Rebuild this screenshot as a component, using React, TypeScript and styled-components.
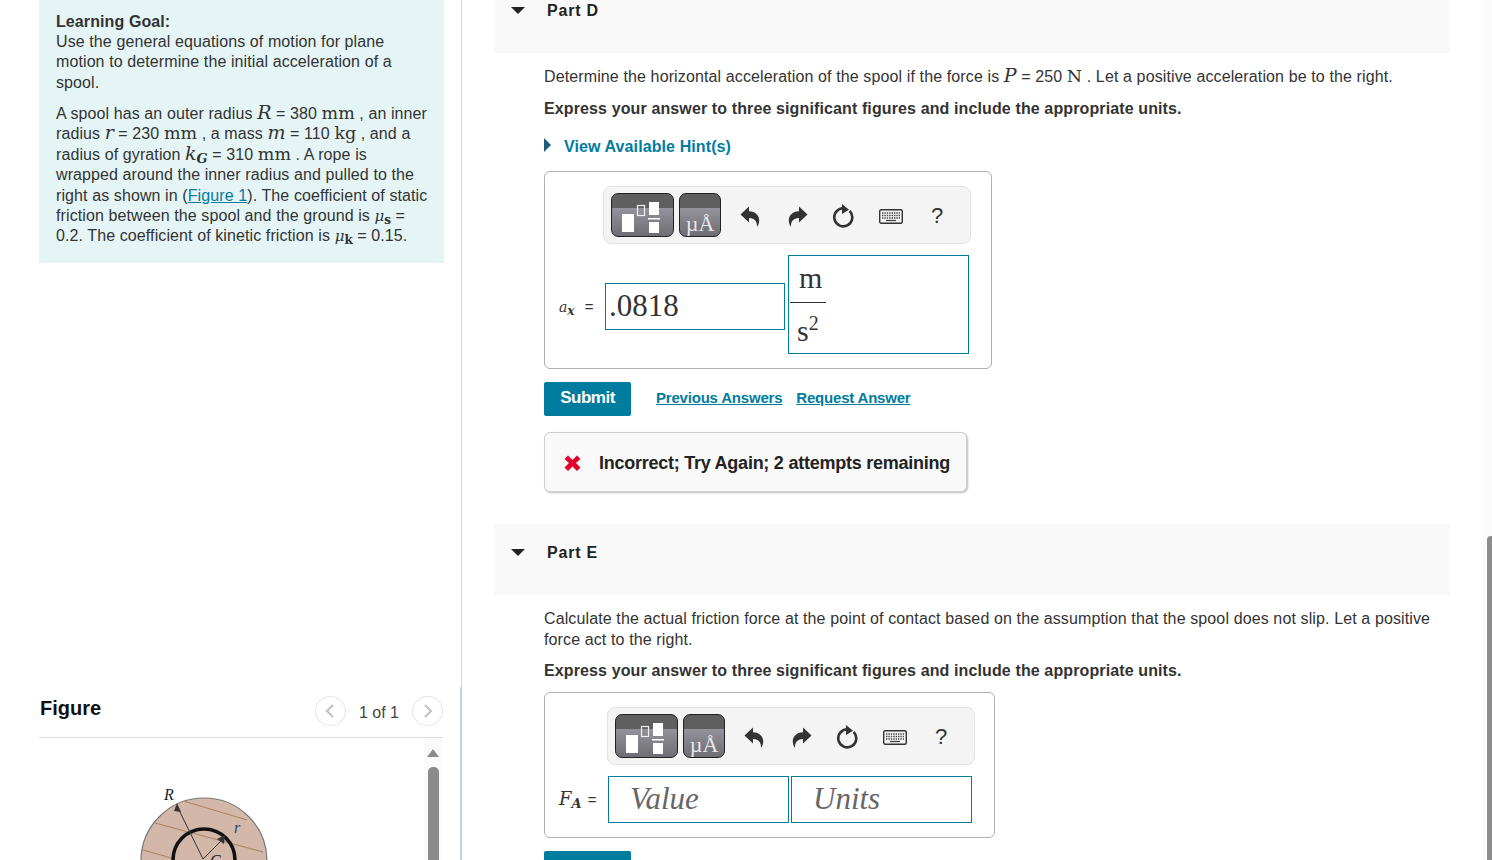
import React from 'react'
import styled, { createGlobalStyle } from 'styled-components'

const GlobalStyle = createGlobalStyle`
  html, body {
    margin: 0;
    height: 100%;
    overflow: hidden;
    background: #fff;
  }
  body {
    font-family: "Liberation Sans", Arial, sans-serif;
    font-size: 16px;
    color: #333;
  }
`

const serif = `"Liberation Serif", "Times New Roman", serif`
const mathFont = `"DejaVu Serif", "Liberation Serif", serif`
const teal = '#007c9f'

const Page = styled.div`
  display: flex;
  width: 1492px;
  height: 860px;
  overflow: hidden;
`
const LeftPane = styled.aside`
  flex: 0 0 462px;
  box-sizing: border-box;
  height: 860px;
  padding: 0 18px 0 39px;
  background:
    linear-gradient(#d3d3d3, #d3d3d3) right top / 1px 687px no-repeat,
    linear-gradient(#bcd2e8, #bcd2e8) right bottom / 2px 173px no-repeat;
  display: flex;
  flex-direction: column;
  overflow: hidden;
`
const GoalBox = styled.div`
  flex: none;
  box-sizing: border-box;
  height: 263px;
  padding: 11.6px 13px 0 17px;
  background: #e5f5f6;
  line-height: 20.4px;
  letter-spacing: 0.1px;
  p { margin: 0 0 10.8px; }
  strong { font-weight: 700; }
  a { color: ${teal}; text-decoration: underline; }
`
const V = styled.span<{ $size?: number }>`
  font-family: ${mathFont};
  font-style: italic;
  font-size: ${p => p.$size ?? 19}px;
  line-height: 0;
  letter-spacing: 0;
`
const U = styled.span<{ $size?: number }>`
  font-family: ${mathFont};
  font-size: ${p => p.$size ?? 17.5}px;
  line-height: 0;
  letter-spacing: 0;
`
const Sub = styled.sub<{ $italic?: boolean; $size?: number }>`
  font-family: ${mathFont};
  font-size: ${p => p.$size ?? 12}px;
  font-style: ${p => (p.$italic ? 'italic' : 'normal')};
  font-weight: 700;
  line-height: 0;
  letter-spacing: 0;
  vertical-align: -3px;
`
const FigureHead = styled.div`
  flex: none;
  margin-top: 432px;
  margin-right: 1px;
  height: 42px;
  border-bottom: 1px solid #dcdcdc;
  display: flex;
  align-items: flex-start;
`
const FigureTitle = styled.div`
  font-size: 20px;
  font-weight: 700;
  color: #111;
  line-height: 26px;
  flex: 1;
  padding-left: 1px;
`
const Pager = styled.div`
  display: flex;
  align-items: center;
  gap: 13px;
  margin-top: 1px;
  font-size: 16px;
  color: #444;
`
const PagerCount = styled.span`
  padding-top: 4px;
`
const RoundBtn = styled.div`
  box-sizing: border-box;
  width: 31px;
  height: 30px;
  border: 1px solid #e4e4e4;
  border-radius: 50%;
  display: flex;
  align-items: center;
  justify-content: center;
`
const FigureBody = styled.div`
  flex: 1;
  min-height: 0;
  display: flex;
  justify-content: space-between;
  overflow: hidden;
`
const SpoolArt = styled.svg`
  display: block;
  margin: 35px 0 0 87px;
  flex: none;
`
const MiniRail = styled.div`
  width: 18px;
  margin-right: 2px;
  background: #fafafa;
  display: flex;
  flex-direction: column;
  align-items: center;
  padding-top: 11px;
  gap: 10px;
`
const MiniUp = styled.div`
  width: 0;
  height: 0;
  border-left: 6px solid transparent;
  border-right: 6px solid transparent;
  border-bottom: 8px solid #8a8a8a;
`
const MiniThumb = styled.div`
  width: 11px;
  flex: 1;
  border-radius: 5px 5px 0 0;
  background: #8a8a8a;
`
const RightPane = styled.main`
  flex: 0 0 989px;
  box-sizing: border-box;
  padding-left: 32px;
  padding-right: 1px;
  overflow: hidden;
`
const PartHead = styled.div<{ $cut?: boolean }>`
  box-sizing: border-box;
  height: ${p => (p.$cut ? 53 : 71)}px;
  padding-top: ${p => (p.$cut ? 0 : 18)}px;
  background: #f9f9f9;
  display: flex;
  align-items: flex-start;
  font-weight: 700;
  line-height: 21px;
  letter-spacing: 0.8px;
  color: #222;
`
const Caret = styled.span`
  width: 0;
  height: 0;
  margin: 7px 22px 0 17px;
  border-left: 7px solid transparent;
  border-right: 7px solid transparent;
  border-top: 7px solid #222;
`
const PartBody = styled.section`
  padding-left: 50px;
  height: 471px;
  overflow: hidden;
`
const Para = styled.p<{ $top: number }>`
  margin: ${p => p.$top}px 0 0;
  line-height: 21px;
  letter-spacing: 0.12px;
`
const Instruction = styled(Para)`
  font-weight: 700;
  letter-spacing: 0.12px;
  color: #333;
`
const HintRow = styled.div`
  margin-top: 17px;
  display: flex;
  align-items: center;
  font-weight: 700;
  color: ${teal};
  line-height: 21px;
  letter-spacing: 0.1px;
`
const HintCaret = styled.span`
  width: 0;
  height: 0;
  margin-right: 13px;
  margin-bottom: 4px;
  border-top: 7px solid transparent;
  border-bottom: 7px solid transparent;
  border-left: 7px solid #1d5c7a;
`
const AnswerBox = styled.div<{ $width: number; $height: number; $top: number }>`
  box-sizing: border-box;
  width: ${p => p.$width}px;
  height: ${p => p.$height}px;
  margin-top: ${p => p.$top}px;
  border: 1px solid #b0b0b0;
  border-radius: 6px;
  padding-top: 14px;
`
const Toolbar = styled.div<{ $left: number }>`
  box-sizing: border-box;
  width: 368px;
  height: 58px;
  margin-left: ${p => p.$left}px;
  padding: 6px 7px;
  display: flex;
  align-items: flex-start;
  gap: 5px;
  background: #f4f4f4;
  border: 1px solid #e2e2e2;
  border-radius: 8px;
`
const ToolBtn = styled.div<{ $w: number }>`
  box-sizing: border-box;
  flex: none;
  width: ${p => p.$w}px;
  height: 44px;
  border: 1px solid #222;
  border-radius: 7px;
  overflow: hidden;
  background: linear-gradient(#5f5f5f 0 14px, #94939b 14px, #6e6d73 100%);
  display: flex;
  align-items: flex-end;
  justify-content: center;
`
const UnitGlyph = styled.span`
  font-family: ${serif};
  font-size: 22px;
  line-height: 24px;
  color: #e8e8ea;
  white-space: nowrap;
`
const IconSlot = styled.div<{ $w: number }>`
  flex: none;
  width: ${p => p.$w}px;
  height: 46px;
  display: flex;
  align-items: center;
  justify-content: center;
`
const HelpGlyph = styled.span`
  font-size: 22px;
  color: #333;
  line-height: 48px;
`
const UndoSvg = styled.svg<{ $flip?: boolean }>`
  transform: ${p => (p.$flip ? 'scaleX(-1)' : 'none')};
`
const AnswerRow = styled.div<{ $top: number }>`
  display: flex;
  align-items: center;
  margin-top: ${p => p.$top}px;
  padding-left: 14px;
`
const MathLabel = styled.div<{ $w: number; $spacing: number }>`
  flex: none;
  box-sizing: border-box;
  width: ${p => p.$w}px;
  margin-top: 4px;
  font-size: 15px;
  white-space: nowrap;
  word-spacing: ${p => p.$spacing}px;
`
const Field = styled.div<{ $w?: number; $h: number; $italic?: boolean; $pad?: number }>`
  box-sizing: border-box;
  flex: none;
  width: ${p => p.$w ?? 181}px;
  height: ${p => p.$h}px;
  margin-top: 4px;
  border: 1px solid ${teal};
  padding-left: ${p => p.$pad ?? 3}px;
  font-family: ${serif};
  font-size: 31px;
  font-style: ${p => (p.$italic ? 'italic' : 'normal')};
  color: ${p => (p.$italic ? '#666' : '#333')};
  line-height: 44px;
  background: #fff;
`
const UnitsInput = styled(Field)`
  margin-left: 2px;
`
const UnitField = styled.div`
  box-sizing: border-box;
  flex: none;
  width: 181px;
  height: 99px;
  margin-left: 3px;
  border: 1px solid ${teal};
  padding-left: 1px;
  font-family: ${serif};
  color: #333;
`
const Fraction = styled.div`
  width: 36px;
  display: flex;
  flex-direction: column;
  font-size: 30px;
`
const Numer = styled.div`
  box-sizing: border-box;
  width: 100%;
  height: 47px;
  padding-left: 9px;
  line-height: 44px;
  border-bottom: 1px solid #333;
`
const Denom = styled.div`
  width: 100%;
  line-height: 55px;
  padding-left: 7px;
  sup { font-size: 20px; line-height: 0; vertical-align: 11px; }
`
const ActionRow = styled.div`
  display: flex;
  align-items: center;
  margin-top: 13px;
`
const SubmitBtn = styled.div`
  width: 87px;
  height: 34px;
  flex: none;
  border-radius: 2px;
  background: ${teal};
  color: #fff;
  font-weight: 700;
  font-size: 17px;
  letter-spacing: -0.5px;
  line-height: 32px;
  text-align: center;
`
const TextLink = styled.a<{ $left: number }>`
  margin-left: ${p => p.$left}px;
  margin-bottom: 4px;
  color: ${teal};
  font-weight: 700;
  font-size: 15px;
  letter-spacing: -0.2px;
  text-decoration: underline;
`
const Feedback = styled.div`
  box-sizing: border-box;
  width: 423px;
  height: 60px;
  margin-top: 16px;
  padding-left: 18px;
  padding-top: 2px;
  display: flex;
  align-items: center;
  gap: 17px;
  background: #f9f9f9;
  border: 1px solid #cfcfcf;
  border-radius: 6px;
  box-shadow: 1px 1px 2px #bbb;
  font-size: 18px;
  font-weight: 700;
  color: #222;
  white-space: nowrap;
  letter-spacing: -0.25px;
`
const PageRail = styled.div`
  flex: 0 0 9px;
  margin-left: auto;
  padding: 536px 0 0 4px;
  box-sizing: border-box;
  background: #fbfbfb;
`
const PageThumb = styled.div`
  height: 324px;
  background: #8c8c8c;
  border-radius: 4px 0 0 0;
`

const Undo = ({ flip }: { flip?: boolean }) => (
  <UndoSvg $flip={flip} width="20" height="21" viewBox="0 0 20 21">
    <path
      d="M0.500 8.500 9 0.500V5.300C15.500 5.600 19.500 9.500 19.200 15 19 17.500 18.200 19.500 17 20.800 17.300 15.500 14.800 12 9 12V16.500Z"
      fill="#333"
    />
  </UndoSvg>
)

const Reset = () => (
  <svg width="22" height="24" viewBox="0 0 22 24">
    <path d="M10.500 4.300A9 9 0 1 0 16.600 6.900" fill="none" stroke="#333" strokeWidth="2.6" />
    <path d="M9 0 16 5.800 9 10Z" fill="#333" />
  </svg>
)

const Keyboard = () => (
  <svg width="24" height="15" viewBox="0 0 24 15">
    <rect x="0.700" y="0.700" width="22.600" height="13.600" rx="1.500" fill="#f4f4f4" stroke="#333" strokeWidth="1.400" />
    <path d="M3 4h18M3 6.500h18M3 9h18" stroke="#444" strokeWidth="1.300" strokeDasharray="1.400 1" />
    <path d="M7 11.500h10" stroke="#444" strokeWidth="1.300" />
  </svg>
)

const TemplateIcon = () => (
  <svg width="61" height="42" viewBox="0 0 61 42">
    <rect x="10" y="20" width="12" height="18" fill="#fff" />
    <rect x="25.500" y="11.500" width="7" height="10" fill="none" stroke="#eee" strokeWidth="1.200" />
    <rect x="37" y="8" width="10" height="13" fill="#fff" />
    <rect x="36" y="24" width="12" height="1.500" fill="#fff" />
    <rect x="37" y="28" width="10" height="11" fill="#fff" />
  </svg>
)

const Tools = ({ left }: { left: number }) => (
  <Toolbar $left={left}>
    <ToolBtn $w={63}>
      <TemplateIcon />
    </ToolBtn>
    <ToolBtn $w={42}>
      <UnitGlyph>µÅ</UnitGlyph>
    </ToolBtn>
    <IconSlot $w={48}>
      <Undo />
    </IconSlot>
    <IconSlot $w={38}>
      <Undo flip />
    </IconSlot>
    <IconSlot $w={44}>
      <Reset />
    </IconSlot>
    <IconSlot $w={40}>
      <Keyboard />
    </IconSlot>
    <IconSlot $w={42}>
      <HelpGlyph>?</HelpGlyph>
    </IconSlot>
  </Toolbar>
)

const Chevron = ({ right }: { right?: boolean }) => (
  <svg width="10" height="16" viewBox="0 0 10 16">
    <path d={right ? 'M2 2l6 6-6 6' : 'M8 2 2 8l6 6'} fill="none" stroke="#c4c4c4" strokeWidth="2.200" />
  </svg>
)

const Spool = () => (
  <SpoolArt width="170" height="95" viewBox="0 0 170 95">
    <defs>
      <clipPath id="disc">
        <circle cx="78" cy="88" r="63" />
      </clipPath>
    </defs>
    <circle cx="78" cy="88" r="63" fill="#d3b8aa" stroke="#777" strokeWidth="1.200" />
    <g clipPath="url(#disc)" stroke="#a9805f" strokeWidth="1">
      <path d="M54 27 121 47M29 50 137 79M17 77 49 86" />
    </g>
    <circle cx="78" cy="87" r="31" fill="none" stroke="#111" strokeWidth="3.600" />
    <path d="M77 86 52 35M77 86 96 67" stroke="#333" strokeWidth="1" fill="none" />
    <path d="M51 30 55 39 48 38ZM99 62 98 71 91 66Z" fill="#333" />
    <text x="38" y="27" fontFamily={serif} fontStyle="italic" fontSize="16" fill="#222">R</text>
    <text x="108" y="60" fontFamily={serif} fontStyle="italic" fontSize="16" fill="#26466d">r</text>
    <text x="84" y="93" fontFamily={serif} fontStyle="italic" fontSize="16" fill="#222">G</text>
  </SpoolArt>
)

const CrossMark = () => (
  <svg width="19" height="18" viewBox="0 0 19 18">
    <path d="M1.500 5 5 1.500 9.500 6 14 1.500 17.500 5 13 9l4.500 4.500-3.500 3.500L9.500 12.500 5 17 1.500 13.500 6 9Z" fill="#e0002b" />
  </svg>
)

export default function App() {
  return (
    <>
      <GlobalStyle />
      <Page>
        <LeftPane>
          <GoalBox>
            <p>
              <strong>Learning Goal:</strong>
              <br />
              Use the general equations of motion for plane motion to determine the initial acceleration of a spool.
            </p>
            <p>
              A spool has an outer radius <V>R</V> = 380 <U>mm</U> , an inner radius <V>r</V> = 230 <U>mm</U> , a mass{' '}
              <V>m</V> = 110 <U>kg</U> , and a radius of gyration <V>k</V>
              <Sub $italic $size={13}>G</Sub> = 310 <U>mm</U> . A rope is wrapped around the inner radius and pulled to the right as shown in (
              <a>Figure 1</a>). The coefficient of static friction between the spool and the ground is <V $size={15}>μ</V>
              <Sub>s</Sub> = 0.2. The coefficient of kinetic friction is <V $size={15}>μ</V>
              <Sub>k</Sub> = 0.15.
            </p>
          </GoalBox>
          <FigureHead>
            <FigureTitle>Figure</FigureTitle>
            <Pager>
              <RoundBtn>
                <Chevron />
              </RoundBtn>
              <PagerCount>1 of 1</PagerCount>
              <RoundBtn>
                <Chevron right />
              </RoundBtn>
            </Pager>
          </FigureHead>
          <FigureBody>
            <Spool />
            <MiniRail>
              <MiniUp />
              <MiniThumb />
            </MiniRail>
          </FigureBody>
        </LeftPane>
        <RightPane>
          <PartHead $cut>
            <Caret />
            Part D
          </PartHead>
          <PartBody>
            <Para $top={13}>
              Determine the horizontal acceleration of the spool if the force is <V>P</V> = 250 <U>N</U> . Let a positive
              acceleration be to the right.
            </Para>
            <Instruction $top={11}>Express your answer to three significant figures and include the appropriate units.</Instruction>
            <HintRow>
              <HintCaret />
              View Available Hint(s)
            </HintRow>
            <AnswerBox $width={448} $height={198} $top={14}>
              <Tools left={58} />
              <AnswerRow $top={11}>
                <MathLabel $w={46} $spacing={6}>
                  <V $size={14}>a</V>
                  <Sub $italic $size={12}>x</Sub> =
                </MathLabel>
                <Field $w={180} $h={47}>.0818</Field>
                <UnitField>
                  <Fraction>
                    <Numer>m</Numer>
                    <Denom>
                      s<sup>2</sup>
                    </Denom>
                  </Fraction>
                </UnitField>
              </AnswerRow>
            </AnswerBox>
            <ActionRow>
              <SubmitBtn>Submit</SubmitBtn>
              <TextLink $left={25}>Previous Answers</TextLink>
              <TextLink $left={14}>Request Answer</TextLink>
            </ActionRow>
            <Feedback>
              <CrossMark />
              Incorrect; Try Again; 2 attempts remaining
            </Feedback>
          </PartBody>
          <PartHead>
            <Caret />
            Part E
          </PartHead>
          <PartBody>
            <Para $top={13}>
              Calculate the actual friction force at the point of contact based on the assumption that the spool does not
              slip. Let a positive force act to the right.
            </Para>
            <Instruction $top={10}>Express your answer to three significant figures and include the appropriate units.</Instruction>
            <AnswerBox $width={451} $height={146} $top={11}>
              <Tools left={62} />
              <AnswerRow $top={7}>
                <MathLabel $w={49} $spacing={2}>
                  <V $size={18}>F</V>
                  <Sub $italic $size={13}>A</Sub> =
                </MathLabel>
                <Field $h={47} $italic $pad={21}>Value</Field>
                <UnitsInput $h={47} $italic $pad={21}>Units</UnitsInput>
              </AnswerRow>
            </AnswerBox>
            <ActionRow>
              <SubmitBtn />
            </ActionRow>
          </PartBody>
        </RightPane>
        <PageRail>
          <PageThumb />
        </PageRail>
      </Page>
    </>
  )
}
